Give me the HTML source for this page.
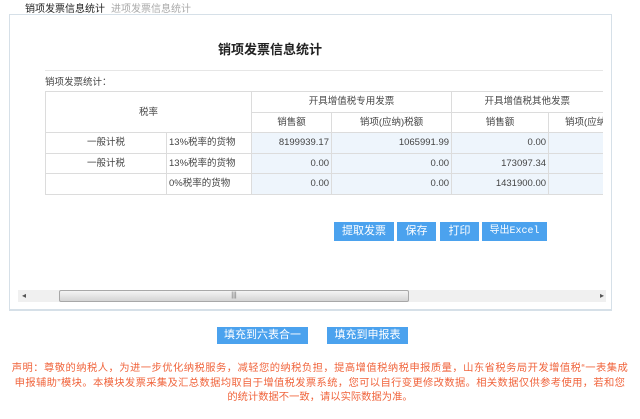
<!DOCTYPE html>
<html><head><meta charset="utf-8"><style>
*{margin:0;padding:0;box-sizing:border-box}
body{width:640px;height:419px;background:#fff;font-family:"Liberation Sans","Noto Sans CJK SC",sans-serif;font-size:10px;color:#444;position:relative;overflow:hidden}
.abs{position:absolute}
.tab{top:0;font-size:10px}
.panel{left:9px;top:14px;width:603px;height:297px;border:1px solid #d6e0e8;border-bottom-width:2px}
.wrap{position:absolute;left:45px;top:91px;width:558px;height:104px;overflow:hidden}
table{border-collapse:collapse;table-layout:fixed;width:557px}
td{border:1px solid #dcdcdc;height:20.5px;line-height:19px;vertical-align:middle;font-size:9.5px;padding:0 2px;white-space:nowrap;overflow:hidden}
.b{background:#eef5fc;text-align:right}
.c{text-align:center}
.btn{background:#4ba2ee;color:#fff;text-align:center;font-size:11px;line-height:19px;height:19px}
.note{left:10px;top:362px;width:620px;color:#f0643c;font-size:10.3px;line-height:14.6px;text-align:center;white-space:nowrap}
</style></head><body>
<div class="abs tab" style="left:25px;color:#222">销项发票信息统计</div>
<div class="abs tab" style="left:111px;color:#aaa">进项发票信息统计</div>
<div class="abs panel"></div>
<div class="abs" style="left:218px;top:39px;font-size:13px;font-weight:bold;color:#222">销项发票信息统计</div>
<div class="abs" style="left:45px;top:70px;width:558px;height:1px;background:#e6e6e6"></div>
<div class="abs" style="left:45px;top:74px;font-size:9.5px">销项发票统计：</div>
<div class="wrap">
<table>
<colgroup><col style="width:121px"><col style="width:85px"><col style="width:80px"><col style="width:120px"><col style="width:97px"><col style="width:54px"></colgroup>
<tr><td colspan="2" rowspan="2" class="c">税率</td><td colspan="2" class="c">开具增值税专用发票</td><td colspan="2" class="c" style="border-right:none">开具增值税其他发票</td></tr>
<tr><td class="c">销售额</td><td class="c">销项(应纳)税额</td><td class="c">销售额</td><td class="c" style="text-align:left;padding-left:16px;border-right:none">销项(应纳</td></tr>
<tr><td class="c">一般计税</td><td>13%税率的货物</td><td class="b">8199939.17</td><td class="b">1065991.99</td><td class="b">0.00</td><td class="b" style="border-right:none"></td></tr>
<tr><td class="c">一般计税</td><td>13%税率的货物</td><td class="b">0.00</td><td class="b">0.00</td><td class="b">173097.34</td><td class="b" style="border-right:none"></td></tr>
<tr><td class="c"></td><td>0%税率的货物</td><td class="b">0.00</td><td class="b">0.00</td><td class="b">1431900.00</td><td class="b" style="border-right:none"></td></tr>
</table>
</div>
<div class="abs btn" style="left:334px;top:222px;width:60px">提取发票</div>
<div class="abs btn" style="left:397px;top:222px;width:39px">保存</div>
<div class="abs btn" style="left:440px;top:222px;width:39px">打印</div>
<div class="abs btn" style="left:482px;top:222px;width:65px;font-family:'Liberation Mono','Noto Sans CJK SC',monospace;font-size:10px">导出Excel</div>
<div class="abs" style="left:18px;top:290px;width:588px;height:12px;background:#f0f0f0"></div>
<div class="abs" style="left:22px;top:291px;font-size:8px;color:#555">◂</div>
<div class="abs" style="left:600px;top:291px;font-size:8px;color:#555">▸</div>
<div class="abs" style="left:59px;top:290px;width:350px;height:12px;background:linear-gradient(#f4f4f4,#d4d4d4);border:1px solid #a8a8a8;border-radius:2px;text-align:center;font-size:7px;line-height:10px;color:#666">|||</div>
<div class="abs btn" style="left:217px;top:327px;width:91px;height:17px;line-height:17px">填充到六表合一</div>
<div class="abs btn" style="left:327px;top:327px;width:81px;height:17px;line-height:17px">填充到申报表</div>
<div class="abs note"><span style="letter-spacing:0.45px">声明：尊敬的纳税人，为进一步优化纳税服务，减轻您的纳税负担，提高增值税纳税申报质量，山东省税务局开发增值税“一表集成</span><br><span style="letter-spacing:0.35px">申报辅助”模块。本模块发票采集及汇总数据均取自于增值税发票系统，您可以自行变更修改数据。相关数据仅供参考使用，若和您</span><br>的统计数据不一致，请以实际数据为准。</div>
</body></html>
